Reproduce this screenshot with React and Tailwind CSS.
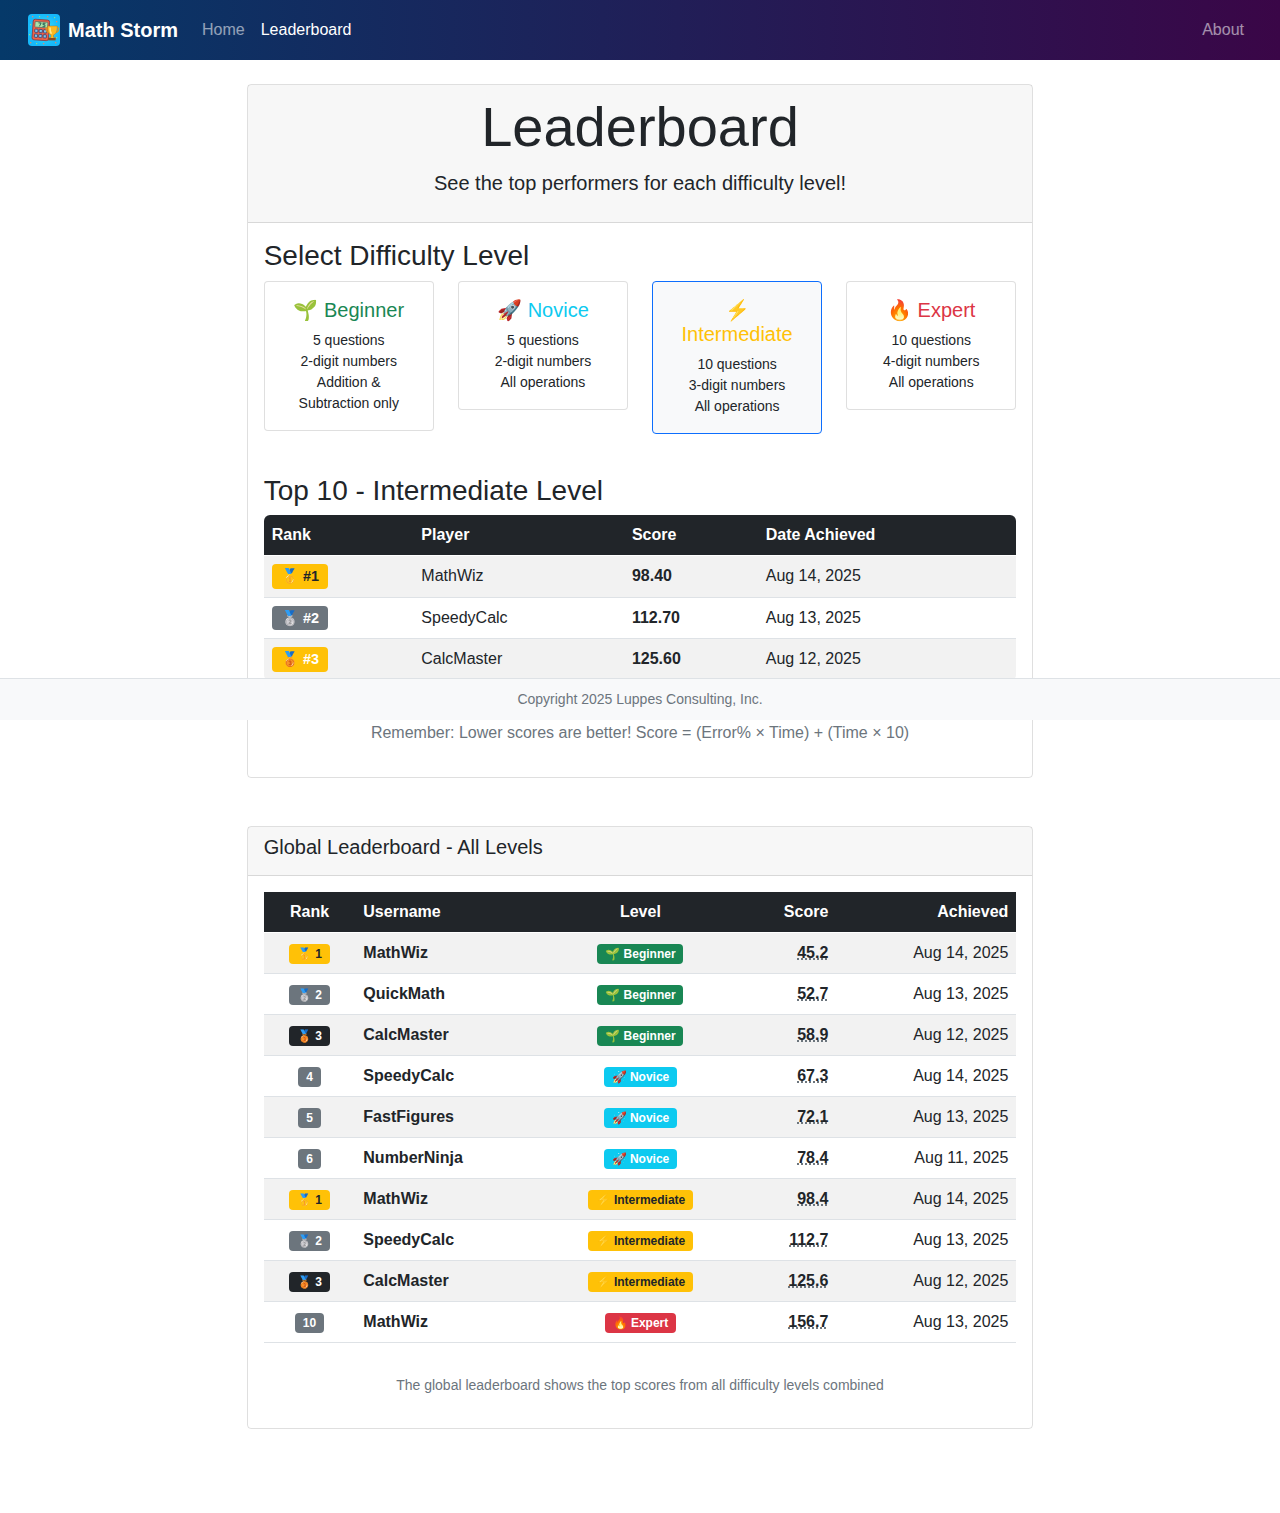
import React from "react";

const LEVELS = {
  Beginner: { icon: "🌱", text: "text-[#198754]", badge: "bg-[#198754] text-white" },
  Novice: { icon: "🚀", text: "text-[#0dcaf0]", badge: "bg-[#0dcaf0] text-white" },
  Intermediate: { icon: "⚡", text: "text-[#ffc107]", badge: "bg-[#ffc107] text-[#212529]" },
  Expert: { icon: "🔥", text: "text-[#dc3545]", badge: "bg-[#dc3545] text-white" },
};

const CARDS = [
  { level: "Beginner", lines: ["5 questions", "2-digit numbers", "Addition & Subtraction only"] },
  { level: "Novice", lines: ["5 questions", "2-digit numbers", "All operations"] },
  { level: "Intermediate", lines: ["10 questions", "3-digit numbers", "All operations"], active: true },
  { level: "Expert", lines: ["10 questions", "4-digit numbers", "All operations"] },
];

const TOP = [
  ["🥇 #1", "bg-[#ffc107] text-[#212529]", "MathWiz", "98.40", "Aug 14, 2025"],
  ["🥈 #2", "bg-[#6c757d] text-white", "SpeedyCalc", "112.70", "Aug 13, 2025"],
  ["🥉 #3", "bg-[#ffc107] text-white", "CalcMaster", "125.60", "Aug 12, 2025"],
];

const GLOBAL = [
  [1, "MathWiz", "Beginner", "45.2", "Aug 14, 2025"],
  [2, "QuickMath", "Beginner", "52.7", "Aug 13, 2025"],
  [3, "CalcMaster", "Beginner", "58.9", "Aug 12, 2025"],
  [4, "SpeedyCalc", "Novice", "67.3", "Aug 14, 2025"],
  [5, "FastFigures", "Novice", "72.1", "Aug 13, 2025"],
  [6, "NumberNinja", "Novice", "78.4", "Aug 11, 2025"],
  [1, "MathWiz", "Intermediate", "98.4", "Aug 14, 2025"],
  [2, "SpeedyCalc", "Intermediate", "112.7", "Aug 13, 2025"],
  [3, "CalcMaster", "Intermediate", "125.6", "Aug 12, 2025"],
  [10, "MathWiz", "Expert", "156.7", "Aug 13, 2025"],
];

const MEDALS = {
  1: { icon: "🥇 ", style: "bg-[#ffc107] text-[#212529]" },
  2: { icon: "🥈 ", style: "bg-[#6c757d] text-white" },
  3: { icon: "🥉 ", style: "bg-[#212529] text-white" },
};

const BADGE =
  "inline-block rounded px-[0.65em] py-[0.35em] text-center align-baseline font-bold leading-none whitespace-nowrap";

function Logo() {
  return (
    <svg width="32" height="32" viewBox="0 0 32 32" className="rounded-[4px]">
      <defs>
        <radialGradient id="sky">
          <stop offset="0" stopColor="#3fe6fb" />
          <stop offset="1" stopColor="#16b9fa" />
        </radialGradient>
      </defs>
      <rect width="32" height="32" fill="url(#sky)" />
      <g fill="#d98a72">
        <rect x="4" y="2" width="1.3" height="1.3" />
        <rect x="19" y="2" width="1.3" height="1.3" />
        <rect x="28" y="7" width="1.3" height="1.3" />
        <rect x="2" y="28" width="1.3" height="1.3" />
        <rect x="15" y="29" width="1.3" height="1.3" />
        <rect x="27" y="28" width="1.3" height="1.3" />
      </g>
      <g fill="#8fdc8a">
        <rect x="11" y="2" width="1.2" height="1.2" />
        <rect x="26" y="3" width="1.2" height="1.2" />
        <rect x="2" y="10" width="1.2" height="1.2" />
        <rect x="1" y="20" width="1.2" height="1.2" />
        <rect x="28" y="23" width="1.2" height="1.2" />
        <rect x="8" y="29" width="1.2" height="1.2" />
      </g>
      <g transform="rotate(4 12 16)">
        <rect x="4.6" y="5.6" width="16.4" height="20.6" rx="2" fill="#ef6247" stroke="#7d3a48" strokeWidth="0.8" />
        <rect x="6.6" y="7.8" width="12.8" height="5.6" rx="0.6" fill="#a9e3ab" stroke="#4a5a5a" strokeWidth="0.6" />
        <path d="M10 9h2.6l-1.4 3.4M17 9h-2.4v1.500h2v2h-2.300" fill="none" stroke="#1f5a50" strokeWidth="0.9" />
        <g fill="#7cc4ec" stroke="#3f3a66" strokeWidth="0.8">
          <rect x="6.8" y="15.4" width="3.2" height="3.2" rx="0.5" />
          <rect x="11.2" y="15.4" width="3.2" height="3.2" rx="0.5" />
          <rect x="15.6" y="15.4" width="3.2" height="3.2" rx="0.5" />
          <rect x="6.8" y="20.4" width="3.2" height="3.2" rx="0.5" />
          <rect x="11.2" y="20.4" width="3.2" height="3.2" rx="0.5" />
          <rect x="15.6" y="20.4" width="3.2" height="3.2" rx="0.5" />
        </g>
      </g>
      <path d="M20 14h-2c0 3 1.400 4.400 3.500 4.600M28.500 14h2.300c0 3-1.600 4.400-3.800 4.600" fill="none" stroke="#e09a1e" strokeWidth="1.2" />
      <path d="M19.500 12h9.800c0 5-1 8.200-3.800 8.900v2.500h1.800v2h-6.200v-2h1.900v-2.500c-2.700-.7-3.500-3.900-3.500-8.900z" fill="#fbb922" stroke="#a8641c" strokeWidth="0.4" />
      <path d="M22 13.500c0 3 .3 5 1.500 6.200" fill="none" stroke="#ffe98c" strokeWidth="1.5" />
      <rect x="20.2" y="24" width="7.4" height="2.4" fill="#8a4a22" />
    </svg>
  );
}

function LevelCard({ level, lines, active }) {
  const { icon, text } = LEVELS[level];
  return (
    <div
      className={
        "rounded border p-4 text-center " +
        (active ? "border-[#0d6efd] bg-[#f8f9fa]" : "border-black/[0.125] bg-white")
      }
    >
      <h5 className={"mb-2 text-xl leading-6 " + text}>
        {icon} {level}
      </h5>
      <p className="text-sm leading-[21px]">
        {lines.map((line) => (
          <span key={line} className="block">{line}</span>
        ))}
      </p>
    </div>
  );
}

const ROW = "border-b border-[#dee2e6] odd:bg-[#f2f2f2]";

export default function App() {
  return (
    <div className="relative min-h-[1513px] bg-white font-['Liberation_Sans',Arial,sans-serif] text-base leading-6 text-[#212529]">
      <nav className="flex h-[60px] items-center bg-[linear-gradient(90deg,#053969_0%,#3a0647_100%)] px-7">
        <Logo />
        <span className="ml-2 text-xl font-bold text-white">Math Storm</span>
        <div className="ml-4 flex grow text-white/55">
          <a className="px-2">Home</a>
          <a className="px-2 text-white">Leaderboard</a>
          <a className="ml-auto px-2">About</a>
        </div>
      </nav>

      <main className="mx-auto w-[786.67px] pt-6">
        <section className="rounded border border-black/[0.125]">
          <header className="border-b border-black/[0.125] bg-black/[0.03] px-4 py-2 text-center">
            <h1 className="mb-2 text-[56px] leading-[1.2]">Leaderboard</h1>
            <p className="mb-4 text-xl leading-[30px]">See the top performers for each difficulty level!</p>
          </header>
          <div className="p-4">
            <h3 className="mb-2 text-[28px] leading-[1.2]">Select Difficulty Level</h3>
            <div className="mb-10 grid grid-cols-4 items-start gap-6">
              {CARDS.map((card) => (
                <LevelCard key={card.level} {...card} />
              ))}
            </div>
            <h3 className="mb-2 text-[28px] leading-[1.2]">Top 10 - Intermediate Level</h3>
            <div className="mb-4 overflow-hidden rounded-[6px]">
              <table className="w-full table-fixed border-collapse text-left">
                <thead>
                  <tr className="border-b border-white bg-[#212529] text-white">
                    <th className="w-[149.65px] p-2">Rank</th>
                    <th className="w-[210.6px] p-2">Player</th>
                    <th className="w-[133.8px] p-2">Score</th>
                    <th className="p-2">Date Achieved</th>
                  </tr>
                </thead>
                <tbody>
                  {TOP.map(([rank, style, player, score, date]) => (
                    <tr key={rank} className={ROW}>
                      <td className="p-2 align-top">
                        <span className={BADGE + " text-[14.4px] " + style}>{rank}</span>
                      </td>
                      <td className="p-2 align-top">{player}</td>
                      <td className="p-2 align-top font-bold">{score}</td>
                      <td className="p-2 align-top">{date}</td>
                    </tr>
                  ))}
                </tbody>
              </table>
            </div>
            <p className="mt-10 mb-4 text-center text-[#6c757d]">
              Remember: Lower scores are better! Score = (Error% × Time) + (Time × 10)
            </p>
          </div>
        </section>

        <section className="mt-12 rounded border border-black/[0.125]">
          <header className="border-b border-black/[0.125] bg-black/[0.03] px-4 py-2">
            <h5 className="mb-2 text-xl leading-6">Global Leaderboard - All Levels</h5>
          </header>
          <div className="p-4">
            <table className="w-full table-fixed border-collapse">
              <thead>
                <tr className="border-b border-white bg-[#212529] text-white">
                  <th className="w-[91.65px] p-2 text-center">Rank</th>
                  <th className="w-[204.6px] p-2 text-left">Username</th>
                  <th className="w-[161px] p-2 text-center">Level</th>
                  <th className="w-[115.4px] p-2 text-right">Score</th>
                  <th className="p-2 text-right">Achieved</th>
                </tr>
              </thead>
              <tbody>
                {GLOBAL.map(([rank, name, level, score, date], i) => {
                  const medal = MEDALS[rank] || { icon: "", style: "bg-[#6c757d] text-white" };
                  return (
                    <tr key={i} className={ROW}>
                      <td className="p-2 text-center align-top">
                        <span className={BADGE + " text-xs/none " + medal.style}>{medal.icon}{rank}</span>
                      </td>
                      <td className="p-2 align-top font-bold">{name}</td>
                      <td className="p-2 text-center align-top">
                        <span className={BADGE + " text-xs/none " + LEVELS[level].badge}>
                          {LEVELS[level].icon} {level}
                        </span>
                      </td>
                      <td className="p-2 text-right align-top font-bold">
                        <span className="underline decoration-[#6c757d] decoration-dotted decoration-2 [text-decoration-skip-ink:none]">{score}</span>
                      </td>
                      <td className="p-2 text-right align-top">{date}</td>
                    </tr>
                  );
                })}
              </tbody>
            </table>
            <p className="mt-8 mb-4 text-center text-sm leading-[21px] text-[#6c757d]">
              The global leaderboard shows the top scores from all difficulty levels combined
            </p>
          </div>
        </section>
      </main>

      <footer className="absolute top-[678px] left-0 flex h-[42px] w-full items-start justify-center border-t border-[#dee2e6] bg-[#f8f9fa] pt-[9.5px] text-sm leading-[21px] text-[#6c757d]">
        Copyright 2025 Luppes Consulting, Inc.
      </footer>
    </div>
  );
}
